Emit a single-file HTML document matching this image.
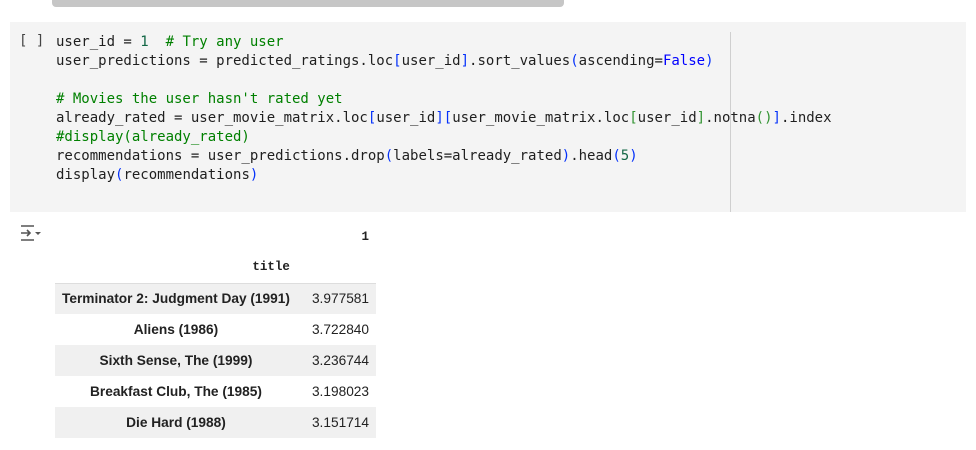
<!DOCTYPE html>
<html><head><meta charset="utf-8"><style>
body{margin:0;width:976px;height:450px;background:#fff;position:relative;overflow:hidden;font-family:"Liberation Sans",Arial,sans-serif}
.sb{position:absolute;left:52px;top:0;width:512px;height:7px;background:#c6c6c6;border-radius:0 0 4px 4px}
.cell{position:absolute;left:10px;top:22px;width:956px;height:190px;background:#f4f4f4}
.vl{position:absolute;left:730px;top:32px;width:1px;height:180px;background:#cfcfcf}
.pr{position:absolute;left:19px;top:33px;font:14px "DejaVu Sans Mono",monospace;color:#444;white-space:pre}
pre{position:absolute;left:56px;top:33px;margin:0;font:14px/19px "DejaVu Sans Mono","Liberation Mono",monospace;color:#1f1f1f}
.c{color:#008000}.n{color:#116644}.b{color:#0431fa}.g{color:#319331}.k{color:#0000ff}
table{position:absolute;left:55px;top:223px;border-collapse:collapse;font-size:13.7px;color:#222}
td,th{height:31px;padding:0 7px;box-sizing:border-box}
th{font:bold 12.5px "Liberation Mono",monospace;text-align:right}
tbody th{font:bold 13.7px "Liberation Sans",Arial,sans-serif;text-align:center}
tbody tr:nth-child(odd){background:#f0f0f0}
td{text-align:right;padding-left:15px}
</style></head><body>
<div class="sb"></div>
<div class="cell"></div><div class="vl"></div>
<div class="pr">[ ]</div>
<pre>user_id = <span class="n">1</span>  <span class="c"># Try any user</span>
user_predictions = predicted_ratings.loc<span class="b">[</span>user_id<span class="b">]</span>.sort_values<span class="b">(</span>ascending=<span class="k">False</span><span class="b">)</span>

<span class="c"># Movies the user hasn't rated yet</span>
already_rated = user_movie_matrix.loc<span class="b">[</span>user_id<span class="b">][</span>user_movie_matrix.loc<span class="g">[</span>user_id<span class="g">]</span>.notna<span class="g">()</span><span class="b">]</span>.index
<span class="c">#display(already_rated)</span>
recommendations = user_predictions.drop<span class="b">(</span>labels=already_rated<span class="b">)</span>.head<span class="b">(</span><span class="n">5</span><span class="b">)</span>
display<span class="b">(</span>recommendations<span class="b">)</span></pre>
<svg style="position:absolute;left:19px;top:224px" width="24" height="18" viewBox="0 0 24 18" fill="none" stroke="#555" stroke-width="1.6"><path d="M2 2h13M2 16h13M2 9h9M8 6l3 3-3 3"/><path d="M16 8h6l-3 3z" fill="#555" stroke="none"/></svg>
<table>
<thead><tr><th style="height:28px"></th><th style="height:28px">1</th></tr>
<tr style="border-bottom:1px solid #ddd"><th style="height:32px">title</th><th></th></tr></thead>
<tbody>
<tr><th>Terminator 2: Judgment Day (1991)</th><td>3.977581</td></tr>
<tr><th>Aliens (1986)</th><td>3.722840</td></tr>
<tr><th>Sixth Sense, The (1999)</th><td>3.236744</td></tr>
<tr><th>Breakfast Club, The (1985)</th><td>3.198023</td></tr>
<tr><th>Die Hard (1988)</th><td>3.151714</td></tr>
</tbody></table>
</body></html>
